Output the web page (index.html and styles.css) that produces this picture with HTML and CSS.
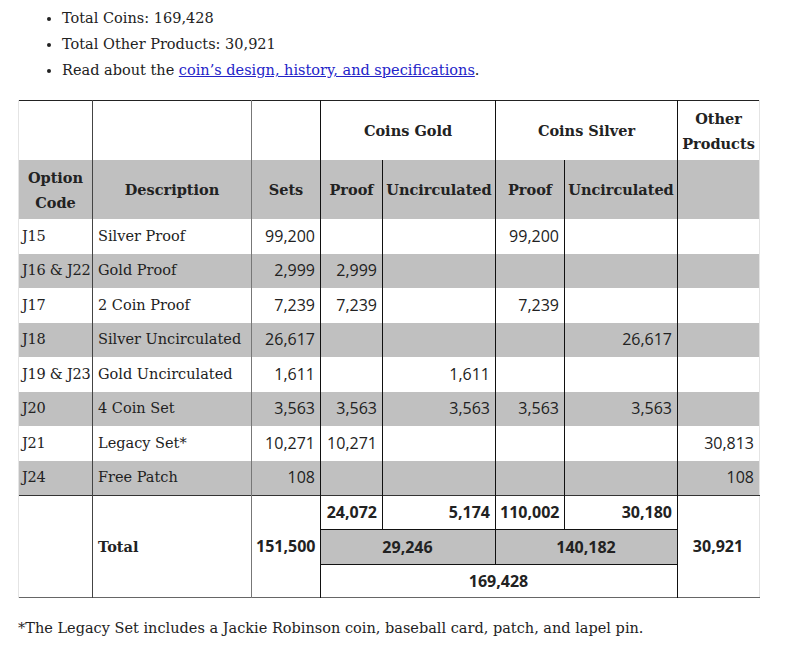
FILE: index.html
```html
<!DOCTYPE html>
<html>
<head>
<meta charset="utf-8">
<link rel="stylesheet" href="styles.css">
</head>
<body>
<ul class="facts">
  <li>Total Coins: 169,428</li>
  <li>Total Other Products: 30,921</li>
  <li>Read about the <a href="#">coin’s design, history, and specifications</a>.</li>
</ul>
<table class="mint">
  <colgroup>
    <col class="c1"><col class="c2"><col class="c3"><col class="c4"><col class="c5"><col class="c6"><col class="c7"><col class="c8">
  </colgroup>
  <thead>
    <tr class="h1">
      <th class="e"></th><th class="g"></th><th class="m"></th>
      <th class="k" colspan="2">Coins Gold</th>
      <th class="k" colspan="2">Coins Silver</th>
      <th class="k">Other<br>Products</th>
    </tr>
    <tr class="h2 grey">
      <th class="e">Option<br>Code</th><th class="g">Description</th><th class="m">Sets</th>
      <th class="k">Proof</th><th class="k">Uncirculated</th><th class="k">Proof</th><th class="k">Uncirculated</th><th class="k"></th>
    </tr>
  </thead>
  <tbody>
    <tr><td class="e">J15</td><td class="g">Silver Proof</td><td class="m n">99,200</td><td class="k n"></td><td class="k n"></td><td class="k n">99,200</td><td class="k n"></td><td class="k n"></td></tr>
    <tr class="grey"><td class="e">J16 &amp; J22</td><td class="g">Gold Proof</td><td class="m n">2,999</td><td class="k n">2,999</td><td class="k n"></td><td class="k n"></td><td class="k n"></td><td class="k n"></td></tr>
    <tr><td class="e">J17</td><td class="g">2 Coin Proof</td><td class="m n">7,239</td><td class="k n">7,239</td><td class="k n"></td><td class="k n">7,239</td><td class="k n"></td><td class="k n"></td></tr>
    <tr class="grey"><td class="e">J18</td><td class="g">Silver Uncirculated</td><td class="m n">26,617</td><td class="k n"></td><td class="k n"></td><td class="k n"></td><td class="k n">26,617</td><td class="k n"></td></tr>
    <tr><td class="e">J19 &amp; J23</td><td class="g">Gold Uncirculated</td><td class="m n">1,611</td><td class="k n"></td><td class="k n">1,611</td><td class="k n"></td><td class="k n"></td><td class="k n"></td></tr>
    <tr class="grey"><td class="e">J20</td><td class="g">4 Coin Set</td><td class="m n">3,563</td><td class="k n">3,563</td><td class="k n">3,563</td><td class="k n">3,563</td><td class="k n">3,563</td><td class="k n"></td></tr>
    <tr><td class="e">J21</td><td class="g">Legacy Set*</td><td class="m n">10,271</td><td class="k n">10,271</td><td class="k n"></td><td class="k n"></td><td class="k n"></td><td class="k n">30,813</td></tr>
    <tr class="grey"><td class="e">J24</td><td class="g">Free Patch</td><td class="m n">108</td><td class="k n"></td><td class="k n"></td><td class="k n"></td><td class="k n"></td><td class="k n">108</td></tr>
  </tbody>
  <tfoot>
    <tr class="t1">
      <td class="e" rowspan="3"></td>
      <td class="g tl" rowspan="3">Total</td>
      <td class="m n b" rowspan="3">151,500</td>
      <td class="k n b">24,072</td>
      <td class="k n b">5,174</td>
      <td class="k n b">110,002</td>
      <td class="k n b">30,180</td>
      <td class="k n b c" rowspan="3">30,921</td>
    </tr>
    <tr class="t2">
      <td class="k n b c grey ln" colspan="2">29,246</td>
      <td class="k n b c grey ln" colspan="2">140,182</td>
    </tr>
    <tr class="t3">
      <td class="k n b c" colspan="4">169,428</td>
    </tr>
  </tfoot>
</table>
<p class="note">*The Legacy Set includes a Jackie Robinson coin, baseball card, patch, and lapel pin.</p>
</body>
</html>
```

FILE: styles.css
```css
html, body {
  margin: 0;
  padding: 0;
  background: #fff;
}
body {
  font-family: "DejaVu Serif", serif;
  font-size: 14.5px;
  color: #222;
  padding-top: 5px;
}
.facts {
  margin: 0;
  padding: 0 0 0 62px;
  line-height: 26px;
}
.facts a {
  color: #2323c8;
}
.mint {
  margin: 17px 0 0 18px;
  border-collapse: collapse;
  table-layout: fixed;
  width: 741px;
  border-top: 1px solid #222;
  border-left: 1px solid #e4e4e4;
  border-right: 1px solid #e4e4e4;
  border-bottom: 1px solid #666;
}
.c1 { width: 74px; }
.c2 { width: 159px; }
.c3 { width: 69px; }
.c4 { width: 62px; }
.c5 { width: 113px; }
.c6 { width: 69px; }
.c7 { width: 113px; }
.c8 { width: 82px; }
.mint th, .mint td {
  padding: 0 5px 0 4px;
  vertical-align: middle;
  line-height: 25px;
  white-space: nowrap;
}
.mint th {
  font-weight: bold;
  text-align: center;
  height: 59px;
  padding: 0 2px;
}
.mint td {
  height: 34.5px;
}
.mint td.e {
  padding-left: 3px;
  padding-right: 0;
  letter-spacing: -0.25px;
}
.mint td.g { padding-left: 5px; }
.grey { background: #c0c0c0; }
.e { border-left: 1px solid #e4e4e4; }
.g { border-left: 1px solid #444; }
.m { border-left: 1px solid #777; }
.k { border-left: 1px solid #111; }
.n {
  font-family: "Open Sans", "Noto Sans", sans-serif;
  font-size: 16px;
  text-align: right;
}
.b { font-weight: bold; }
.c { text-align: center; }
.tl { font-weight: bold; }
.mint tfoot tr.t1 td { border-top: 1px solid #333; height: 33px; }
.mint tfoot tr.t2 td { height: 34px; }
.mint tfoot tr.t3 td { height: 32px; }
.ln { border-top: 1px solid #111; border-bottom: 1px solid #111; }
.note {
  margin: 17px 0 0 18px;
  line-height: 26px;
}
```
